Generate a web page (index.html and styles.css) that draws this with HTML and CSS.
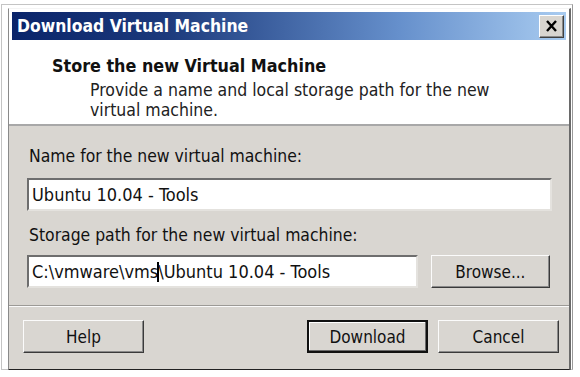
FILE: index.html
```html
<!DOCTYPE html>
<html>
<head>
<meta charset="utf-8">
<link rel="stylesheet" href="styles.css">
</head>
<body>
<div class="window">
  <div class="frame">
    <div class="titlebar">
      <span class="title">Download Virtual Machine</span>
      <button class="close" type="button"><svg width="13" height="12" viewBox="0 0 13 12"><path d="M2 1 L11 11 M11 1 L2 11" stroke="#000" stroke-width="2.4" fill="none"/></svg></button>
    </div>
    <div class="header">
      <div class="h-title">Store the new Virtual Machine</div>
      <div class="h-desc">Provide a name and local storage path for the new virtual machine.</div>
    </div>
    <div class="body">
      <label class="label">Name for the new virtual machine:</label>
      <div class="input wide">Ubuntu 10.04 - Tools</div>
      <label class="label second">Storage path for the new virtual machine:</label>
      <div class="row">
        <div class="input path">C:\vmware\vms<span class="caret"></span>\Ubuntu 10.04 - Tools</div>
        <button class="btn browse" type="button">Browse...</button>
      </div>
    </div>
    <div class="footer">
      <button class="btn" type="button">Help</button>
      <div class="spacer"></div>
      <button class="btn default" type="button">Download</button>
      <button class="btn" type="button">Cancel</button>
    </div>
  </div>
</div>
</body>
</html>
```
FILE: styles.css
```css
html, body {
  margin: 0;
  padding: 0;
  background: #ffffff;
}
body {
  font-family: "DejaVu Sans Condensed", "DejaVu Sans", sans-serif;
  font-size: 15px;
  color: #111;
}
.window {
  margin: 4px 0 0 1px;
  width: 572px;
  height: 366px;
  box-sizing: border-box;
  border: 1px solid #c4c4c4;
  border-right-color: #9a9a9a;
  background: #fff;
  padding: 3px 1px 0 6px;
}
.frame {
  box-sizing: border-box;
  height: 363px;
  border-left: 1px solid #8a8a8a;
  border-top: 1px solid #f4f4f4;
  border-right: 2px solid #6a6a6a;
  border-bottom: 2px solid #222;
  display: flex;
  flex-direction: column;
  background: #fff;
}
.titlebar {
  margin: 3px 3px 0 3px;
  height: 28px;
  background: linear-gradient(to right, #0a246a 0%, #1c3a7c 28%, #6690cc 70%, #a8cbf0 100%);
  display: flex;
  align-items: center;
  padding: 0 2px 0 5px;
}
.title {
  flex: 1;
  color: #fff;
  font-weight: bold;
  font-size: 17.4px;
}
.close {
  width: 25px;
  height: 23px;
  padding: 0;
  background: #d8d5d0;
  border: 1px solid;
  border-color: #fff #404040 #404040 #fff;
  box-shadow: inset -1px -1px 0 #8a8a8a;
  display: flex;
  align-items: center;
  justify-content: center;
}
.header {
  height: 86px;
  box-sizing: border-box;
  border-bottom: 2px solid #a8a8a8;
  padding: 14px 0 0 43px;
  background: #fff;
}
.h-title {
  font-weight: bold;
  font-size: 17.8px;
  line-height: 24px;
}
.h-desc {
  margin: 2px 0 0 38px;
  width: 420px;
  font-size: 17.5px;
  line-height: 20px;
  color: #222;
}
.body {
  background: #d9d6d1;
  height: 180px;
  box-sizing: border-box;
  padding: 20px 19px 0 18px;
  display: flex;
  flex-direction: column;
  border-bottom: 1px solid #9c9a96;
}
.label {
  display: block;
  margin-left: 2px;
  font-size: 17.4px;
  line-height: 20px;
  margin-bottom: 12px;
}
.label.second {
  margin-top: 14px;
  margin-bottom: 10px;
}
.input {
  box-sizing: border-box;
  height: 33px;
  background: #fff;
  border: 2px solid;
  border-color: #6e6e6e #e4e2de #e4e2de #6e6e6e;
  padding: 4px 0 0 3px;
  font-size: 18px;
  line-height: 22px;
  white-space: nowrap;
}
.wide {
  width: 525px;
}
.row {
  display: flex;
  gap: 13px;
}
.path {
  width: 393px;
}
.caret {
  display: inline-block;
  width: 2px;
  height: 20px;
  background: #000;
  vertical-align: -4px;
  margin: 0 -1px 0 -1px;
}
.btn {
  box-sizing: border-box;
  width: 121px;
  height: 33px;
  font-family: inherit;
  font-size: 17px;
  color: #111;
  background: #d9d6d1;
  border: 1px solid;
  border-color: #fbfbfb #3a3a3a #3a3a3a #fbfbfb;
  box-shadow: inset -1px -1px 0 #8a8a8a;
  padding: 0;
}
.browse {
  width: 120px;
}
.footer {
  flex: 1;
  background: #d9d6d1;
  border-top: 1px solid #fafafa;
  display: flex;
  align-items: flex-start;
  padding: 13px 0 0 14px;
  gap: 10px;
}
.spacer {
  flex: 1;
}
.footer .btn:last-child {
  margin-right: 10px;
}
.default {
  border: 2px solid #111;
  box-shadow: inset -1px -1px 0 #6a6a6a, inset 1px 1px 0 #fff;
}
```
